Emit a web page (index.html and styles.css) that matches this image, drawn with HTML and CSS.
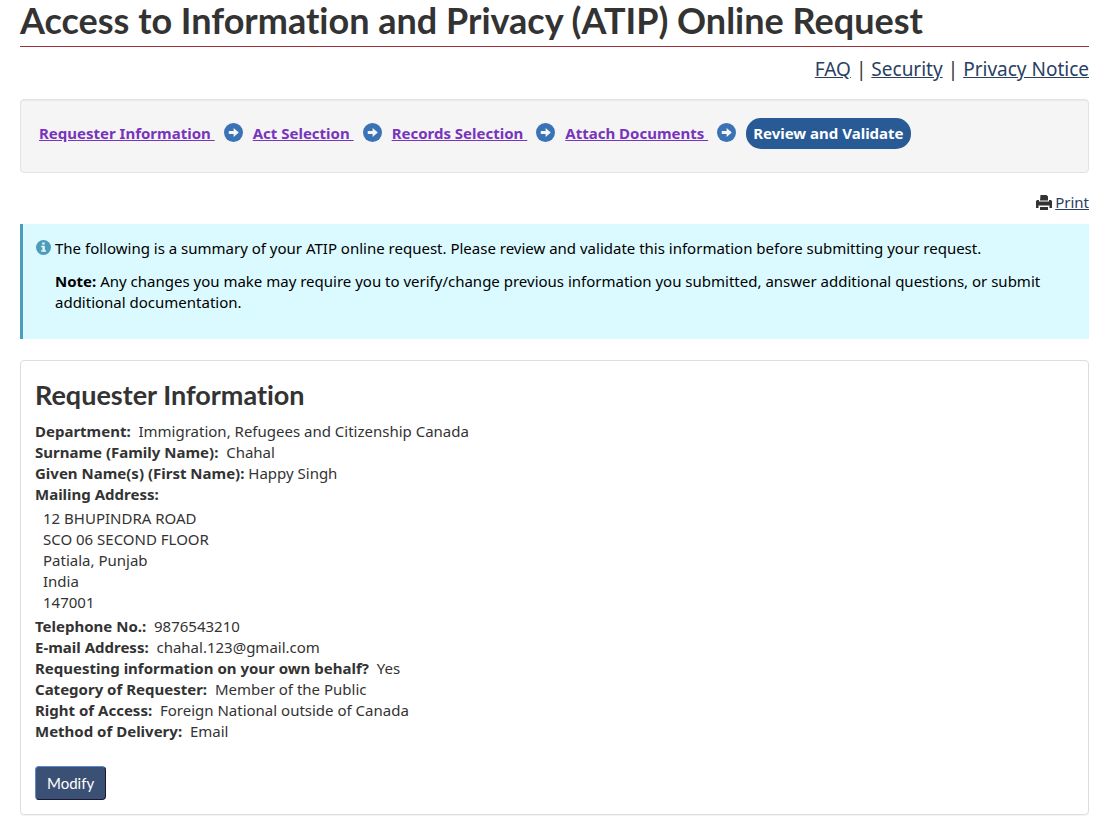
FILE: index.html
```
<!DOCTYPE html>
<html lang="en">
<head>
    <meta charset="UTF-8">
    <meta name="viewport" content="width=device-width, initial-scale=1.0">
    <title>Access to Information and Privacy (ATIP) Online Request</title>
    <link rel="stylesheet" href="styles.css">
</head>
<body>
    <!-- Shared icons -->
    <svg class="icon-defs" aria-hidden="true">
        <symbol id="icon-arrow" viewBox="0 0 18 18">
            <circle cx="9" cy="9" r="9" fill="currentColor"/>
            <path fill="#f5f5f5" d="M4.500 7.500h4.600V4.700L14 9l-4.900 4.300v-2.800H4.500z"/>
        </symbol>
    </svg>

    <main class="container">
        <h1>Access to Information and Privacy (ATIP) Online Request</h1>

        <nav class="top-links" aria-label="Help">
            <a href="#faq">FAQ</a>
            <span>|</span>
            <a href="#security">Security</a>
            <span>|</span>
            <a href="#privacy">Privacy Notice</a>
        </nav>

        <nav class="well" aria-label="Steps">
            <ol class="steps">
                <li><a href="#requester">Requester Information&nbsp;</a><svg class="arrow"><use href="#icon-arrow"/></svg></li>
                <li><a href="#act">Act Selection&nbsp;</a><svg class="arrow"><use href="#icon-arrow"/></svg></li>
                <li><a href="#records">Records Selection&nbsp;</a><svg class="arrow"><use href="#icon-arrow"/></svg></li>
                <li><a href="#documents">Attach Documents&nbsp;</a><svg class="arrow"><use href="#icon-arrow"/></svg></li>
                <li><span class="current" aria-current="step">Review and Validate</span></li>
            </ol>
        </nav>

        <div class="print">
            <svg class="print-icon" viewBox="0 0 16 15" aria-hidden="true">
                <path fill="#333" d="M4.500 0h6L12 1.500V5.500H4zM0 6.500Q0 5 1.500 5H3v1.500h10V5h1.500Q16 5 16 6.500V13h-2.500v-2.500h-11V13H0zM4 12h8v3H4z"/>
            </svg>
            <a href="#print">Print</a>
        </div>

        <section class="alert">
            <svg class="info-icon" viewBox="0 0 15 15" aria-hidden="true">
                <circle cx="7.500" cy="7.500" r="7.500" fill="#4d9cb9"/>
                <path fill="#dff9ff" d="M6.200 2.500h2.500v2H6.200zM5.200 5.700h3.600v4.500h1.200v1.600H5.200v-1.600h1.200V7.200H5.200z"/>
            </svg>
            <div>
                <p>The following is a summary of your ATIP online request. Please review and validate this information before submitting your request.</p>
                <p><strong>Note:</strong> Any changes you make may require you to verify/change previous information you submitted, answer additional questions, or submit additional documentation.</p>
            </div>
        </section>

        <section class="panel" id="requester">
            <h2>Requester Information</h2>
            <div><strong>Department:</strong>&nbsp; Immigration, Refugees and Citizenship Canada</div>
            <div><strong>Surname (Family Name):</strong>&nbsp; Chahal</div>
            <div><strong>Given Name(s) (First Name):</strong> Happy Singh</div>
            <div><strong>Mailing Address:</strong></div>
            <address>
                12 BHUPINDRA ROAD<br>
                SCO 06 SECOND FLOOR<br>
                Patiala, Punjab<br>
                India<br>
                147001
            </address>
            <div><strong>Telephone No.:</strong>&nbsp; 9876543210</div>
            <div><strong>E-mail Address:</strong>&nbsp; chahal.123@gmail.com</div>
            <div><strong>Requesting information on your own behalf?</strong>&nbsp; Yes</div>
            <div><strong>Category of Requester:</strong>&nbsp; Member of the Public</div>
            <div><strong>Right of Access:</strong>&nbsp; Foreign National outside of Canada</div>
            <div><strong>Method of Delivery:</strong>&nbsp; Email</div>
            <button type="button" class="btn">Modify</button>
        </section>
    </main>
</body>
</html>
```
FILE: styles.css
```
* {
    box-sizing: border-box;
}

body {
    margin: 0;
    font-family: "Noto Sans", sans-serif;
    font-size: 15px;
    line-height: 21px;
    color: #333;
    background: #fff;
}

.icon-defs {
    display: none;
}

.container {
    padding: 0 18px 8px 20px;
}

h1,
h2 {
    font-family: Lato, sans-serif;
    font-weight: 700;
    font-variant-ligatures: none;
}

h1 {
    margin: 0;
    padding-bottom: 6px;
    border-bottom: 1px solid #a03037;
    font-size: 36px;
    line-height: 40px;
}

h2 {
    margin: 0 0 11px;
    font-size: 27px;
    line-height: 30px;
}

a {
    color: #284162;
}

.top-links {
    display: flex;
    justify-content: flex-end;
    gap: 5px;
    margin: 8px 0 16px;
    font-size: 19px;
    line-height: 28px;
}

.well {
    padding: 18px;
    min-height: 74px;
    background: #f5f5f5;
    border: 1px solid #e3e3e3;
    border-radius: 4px;
    box-shadow: inset 0 1px 1px rgba(0, 0, 0, 0.05);
}

.steps {
    display: flex;
    flex-wrap: wrap;
    align-items: center;
    gap: 10px;
    margin: 0;
    padding: 0;
    list-style: none;
    font-weight: 700;
}

.steps li {
    display: flex;
    align-items: center;
    gap: 9px;
}

.steps a {
    color: #7834bc;
}

.arrow {
    width: 19px;
    height: 19px;
    margin-bottom: 3px;
    color: #3a73b5;
}

.current {
    padding: 5px 7px;
    border-radius: 15px;
    background: #285a96;
    color: #fff;
}

.print {
    display: flex;
    justify-content: flex-end;
    align-items: center;
    gap: 3px;
    margin: 19px 0 11px;
}

.print-icon {
    width: 16px;
    height: 15px;
}

.alert {
    display: flex;
    gap: 4px;
    margin-bottom: 21px;
    padding: 14px 15px 14px 13px;
    border-left: 3px solid #4d9cb9;
    background: #dbfaff;
    color: #000;
}

.alert p {
    margin: 0 0 12px;
}

.info-icon {
    flex: none;
    width: 15px;
    height: 15px;
    margin-top: 2px;
}

.panel {
    padding: 19px 14px 14px;
    border: 1px solid #ddd;
    border-radius: 4px;
    box-shadow: 0 1px 1px rgba(0, 0, 0, 0.05);
}

address {
    margin: 3px 0 3px 8px;
    font-style: normal;
}

.btn {
    display: block;
    margin-top: 24px;
    padding: 5px 11px;
    border: 1px solid;
    border-color: #5a8bd0 #1a1533 #1a1533 #5a8bd0;
    border-radius: 4px;
    background: #3b5075;
    color: #fff;
    font-family: Lato, sans-serif;
    font-size: 15px;
    line-height: 22px;
    cursor: pointer;
}

.btn:hover {
    background: #243850;
}
```
